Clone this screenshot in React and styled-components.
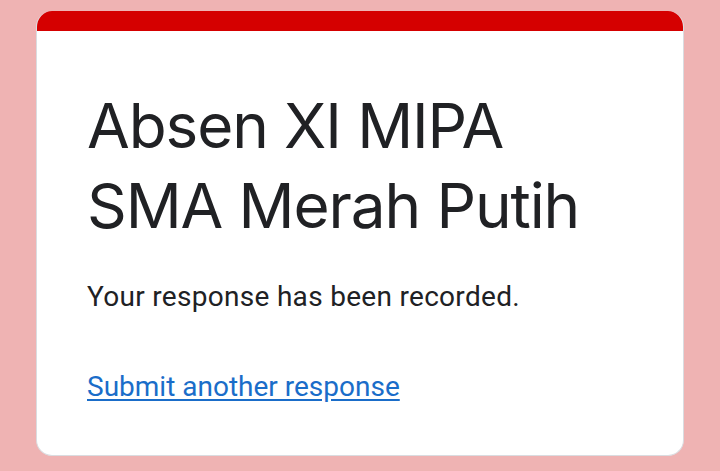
import React from 'react';
import styled, { createGlobalStyle } from 'styled-components';

const GlobalStyle = createGlobalStyle`
  html, body {
    margin: 0;
    padding: 0;
    background: #efb3b3;
  }
  body {
    font-family: Roboto, "Liberation Sans", sans-serif;
  }
`;

const Page = styled.div`
  box-sizing: border-box;
  width: 720px;
  height: 471px;
  padding: 11px 36px 15px;
  display: flex;
  overflow: hidden;
`;

const Card = styled.div`
  flex: 1;
  display: flex;
  flex-direction: column;
  background: #fff;
  border: 1px solid #dadce0;
  border-top: none;
  border-radius: 16px;
  overflow: hidden;
`;

const TopBar = styled.div`
  height: 20px;
  background: #d50000;
  margin: 0 -1px;
`;

const Body = styled.div`
  padding: 55px 50px 0;
  display: flex;
  flex-direction: column;
`;

const Title = styled.h1`
  margin: 0;
  font-family: Inter, "Open Sans", sans-serif;
  font-weight: 400;
  font-size: 62px;
  line-height: 80px;
  color: #202124;
  letter-spacing: -1.1px;
`;

const Message = styled.p`
  margin: 31px 0 0;
  font-size: 28px;
  line-height: 40px;
  color: #202124;
  letter-spacing: 0.3px;
`;

const Link = styled.a`
  margin-top: 50px;
  font-size: 28px;
  line-height: 40px;
  color: #1a6dc9;
  text-decoration: underline;
  text-underline-offset: 3px;
  align-self: flex-start;
`;

export default function App() {
  return (
    <>
      <GlobalStyle />
      <Page>
        <Card>
          <TopBar />
          <Body>
            <Title>
              Absen XI MIPA
              <br />
              SMA Merah Putih
            </Title>
            <Message>Your response has been recorded.</Message>
            <Link href="#">Submit another response</Link>
          </Body>
        </Card>
      </Page>
    </>
  );
}
